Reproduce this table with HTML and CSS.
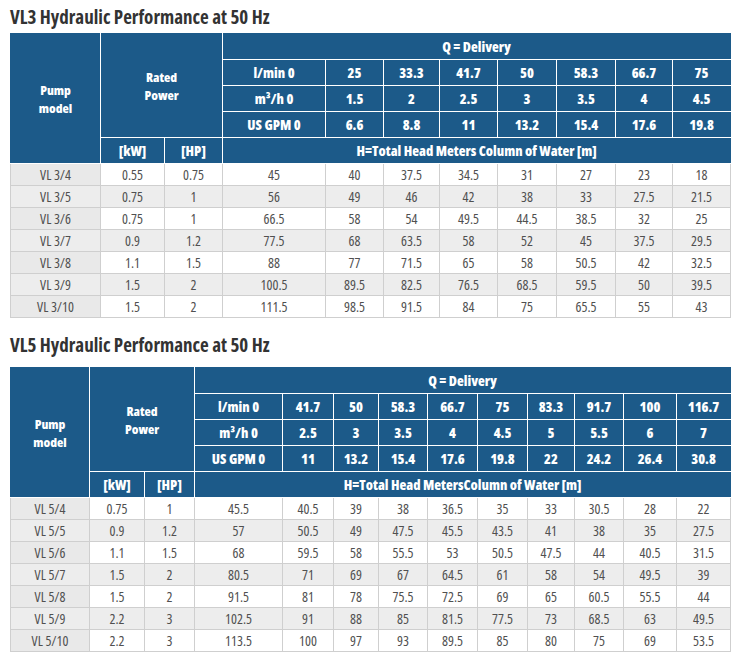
FILE: index.html
```html
<!DOCTYPE html>
<html>
<head>
<meta charset="utf-8">
<link rel="stylesheet" href="styles.css">
</head>
<body>
<div class="page">
  <h2 class="title">VL3 Hydraulic Performance at 50 Hz</h2>
  <table class="perf t1">
    <colgroup>
      <col style="width:90px"><col style="width:64px"><col style="width:58px"><col style="width:103px">
      <col style="width:58px"><col style="width:56px"><col style="width:58px"><col style="width:59px">
      <col style="width:59px"><col style="width:57px"><col style="width:58px">
    </colgroup>
    <thead>
      <tr><th rowspan="5" class="two">Pump<br>model</th><th colspan="2" rowspan="4" class="two">Rated<br>Power</th><th colspan="8">Q = Delivery</th></tr>
      <tr><th>l/min 0</th><th>25</th><th>33.3</th><th>41.7</th><th>50</th><th>58.3</th><th>66.7</th><th>75</th></tr>
      <tr><th>m³/h 0</th><th>1.5</th><th>2</th><th>2.5</th><th>3</th><th>3.5</th><th>4</th><th>4.5</th></tr>
      <tr><th>US GPM 0</th><th>6.6</th><th>8.8</th><th>11</th><th>13.2</th><th>15.4</th><th>17.6</th><th>19.8</th></tr>
      <tr><th>[kW]</th><th>[HP]</th><th colspan="8">H=Total Head Meters Column of Water [m]</th></tr>
    </thead>
    <tbody>
      <tr><td>VL 3/4</td><td>0.55</td><td>0.75</td><td>45</td><td>40</td><td>37.5</td><td>34.5</td><td>31</td><td>27</td><td>23</td><td>18</td></tr>
      <tr><td>VL 3/5</td><td>0.75</td><td>1</td><td>56</td><td>49</td><td>46</td><td>42</td><td>38</td><td>33</td><td>27.5</td><td>21.5</td></tr>
      <tr><td>VL 3/6</td><td>0.75</td><td>1</td><td>66.5</td><td>58</td><td>54</td><td>49.5</td><td>44.5</td><td>38.5</td><td>32</td><td>25</td></tr>
      <tr><td>VL 3/7</td><td>0.9</td><td>1.2</td><td>77.5</td><td>68</td><td>63.5</td><td>58</td><td>52</td><td>45</td><td>37.5</td><td>29.5</td></tr>
      <tr><td>VL 3/8</td><td>1.1</td><td>1.5</td><td>88</td><td>77</td><td>71.5</td><td>65</td><td>58</td><td>50.5</td><td>42</td><td>32.5</td></tr>
      <tr><td>VL 3/9</td><td>1.5</td><td>2</td><td>100.5</td><td>89.5</td><td>82.5</td><td>76.5</td><td>68.5</td><td>59.5</td><td>50</td><td>39.5</td></tr>
      <tr><td>VL 3/10</td><td>1.5</td><td>2</td><td>111.5</td><td>98.5</td><td>91.5</td><td>84</td><td>75</td><td>65.5</td><td>55</td><td>43</td></tr>
    </tbody>
  </table>

  <h2 class="title second">VL5 Hydraulic Performance at 50 Hz</h2>
  <table class="perf t2">
    <colgroup>
      <col style="width:79px"><col style="width:55px"><col style="width:50px"><col style="width:88px">
      <col style="width:51px"><col style="width:45px"><col style="width:49px"><col style="width:50px">
      <col style="width:50px"><col style="width:47px"><col style="width:49px"><col style="width:53px"><col style="width:54px">
    </colgroup>
    <thead>
      <tr><th rowspan="5" class="two">Pump<br>model</th><th colspan="2" rowspan="4" class="two">Rated<br>Power</th><th colspan="10">Q = Delivery</th></tr>
      <tr><th>l/min 0</th><th>41.7</th><th>50</th><th>58.3</th><th>66.7</th><th>75</th><th>83.3</th><th>91.7</th><th>100</th><th>116.7</th></tr>
      <tr><th>m³/h 0</th><th>2.5</th><th>3</th><th>3.5</th><th>4</th><th>4.5</th><th>5</th><th>5.5</th><th>6</th><th>7</th></tr>
      <tr><th>US GPM 0</th><th>11</th><th>13.2</th><th>15.4</th><th>17.6</th><th>19.8</th><th>22</th><th>24.2</th><th>26.4</th><th>30.8</th></tr>
      <tr><th>[kW]</th><th>[HP]</th><th colspan="10">H=Total Head MetersColumn of Water [m]</th></tr>
    </thead>
    <tbody>
      <tr><td>VL 5/4</td><td>0.75</td><td>1</td><td>45.5</td><td>40.5</td><td>39</td><td>38</td><td>36.5</td><td>35</td><td>33</td><td>30.5</td><td>28</td><td>22</td></tr>
      <tr><td>VL 5/5</td><td>0.9</td><td>1.2</td><td>57</td><td>50.5</td><td>49</td><td>47.5</td><td>45.5</td><td>43.5</td><td>41</td><td>38</td><td>35</td><td>27.5</td></tr>
      <tr><td>VL 5/6</td><td>1.1</td><td>1.5</td><td>68</td><td>59.5</td><td>58</td><td>55.5</td><td>53</td><td>50.5</td><td>47.5</td><td>44</td><td>40.5</td><td>31.5</td></tr>
      <tr><td>VL 5/7</td><td>1.5</td><td>2</td><td>80.5</td><td>71</td><td>69</td><td>67</td><td>64.5</td><td>61</td><td>58</td><td>54</td><td>49.5</td><td>39</td></tr>
      <tr><td>VL 5/8</td><td>1.5</td><td>2</td><td>91.5</td><td>81</td><td>78</td><td>75.5</td><td>72.5</td><td>69</td><td>65</td><td>60.5</td><td>55.5</td><td>44</td></tr>
      <tr><td>VL 5/9</td><td>2.2</td><td>3</td><td>102.5</td><td>91</td><td>88</td><td>85</td><td>81.5</td><td>77.5</td><td>73</td><td>68.5</td><td>63</td><td>49.5</td></tr>
      <tr><td>VL 5/10</td><td>2.2</td><td>3</td><td>113.5</td><td>100</td><td>97</td><td>93</td><td>89.5</td><td>85</td><td>80</td><td>75</td><td>69</td><td>53.5</td></tr>
    </tbody>
  </table>
</div>
</body>
</html>
```

FILE: styles.css
```css
html, body {
  margin: 0;
  padding: 0;
  background: #ffffff;
}

.page {
  padding: 6px 10px 0 10px;
  width: 720px;
}

.title {
  margin: 0;
  height: 27px;
  font-family: "Open Sans", "DejaVu Sans Condensed", sans-serif;
  font-stretch: 75%;
  font-weight: 700;
  font-size: 19px;
  line-height: 22px;
  color: #333333;
}

.title.second {
  margin-top: 8px;
  height: 41px;
  padding-top: 8px;
  box-sizing: border-box;
}

.perf {
  border-collapse: collapse;
  table-layout: fixed;
  width: 720px;
}

.perf th {
  background: #1c5a89;
  color: #ffffff;
  font-family: "Open Sans", "DejaVu Sans Condensed", sans-serif;
  font-stretch: 75%;
  font-weight: 800;
  font-size: 14px;
  line-height: 16px;
  height: 25px;
  padding: 0;
  text-align: center;
  vertical-align: middle;
  border: 1px solid #ffffff;
}

.perf th.two {
  font-size: 13px;
  line-height: 18px;
}

.perf thead tr:first-child th {
  border-top-color: #1c5a89;
}

.perf thead th:first-child {
  border-left-color: #1c5a89;
}

.perf thead th:last-child {
  border-right-color: #1c5a89;
}

.perf td {
  font-family: "Open Sans", "Liberation Sans", sans-serif;
  font-stretch: 87.5%;
  font-size: 14px;
  color: #505050;
  height: 21px;
  padding: 0;
  text-align: center;
  vertical-align: middle;
  border: 1px solid #cfcfcf;
  background: #ffffff;
}

.perf tbody tr:nth-child(even) td {
  background: #ededed;
}

.perf tbody td:first-child {
  background: #e9e9e9;
}
```
